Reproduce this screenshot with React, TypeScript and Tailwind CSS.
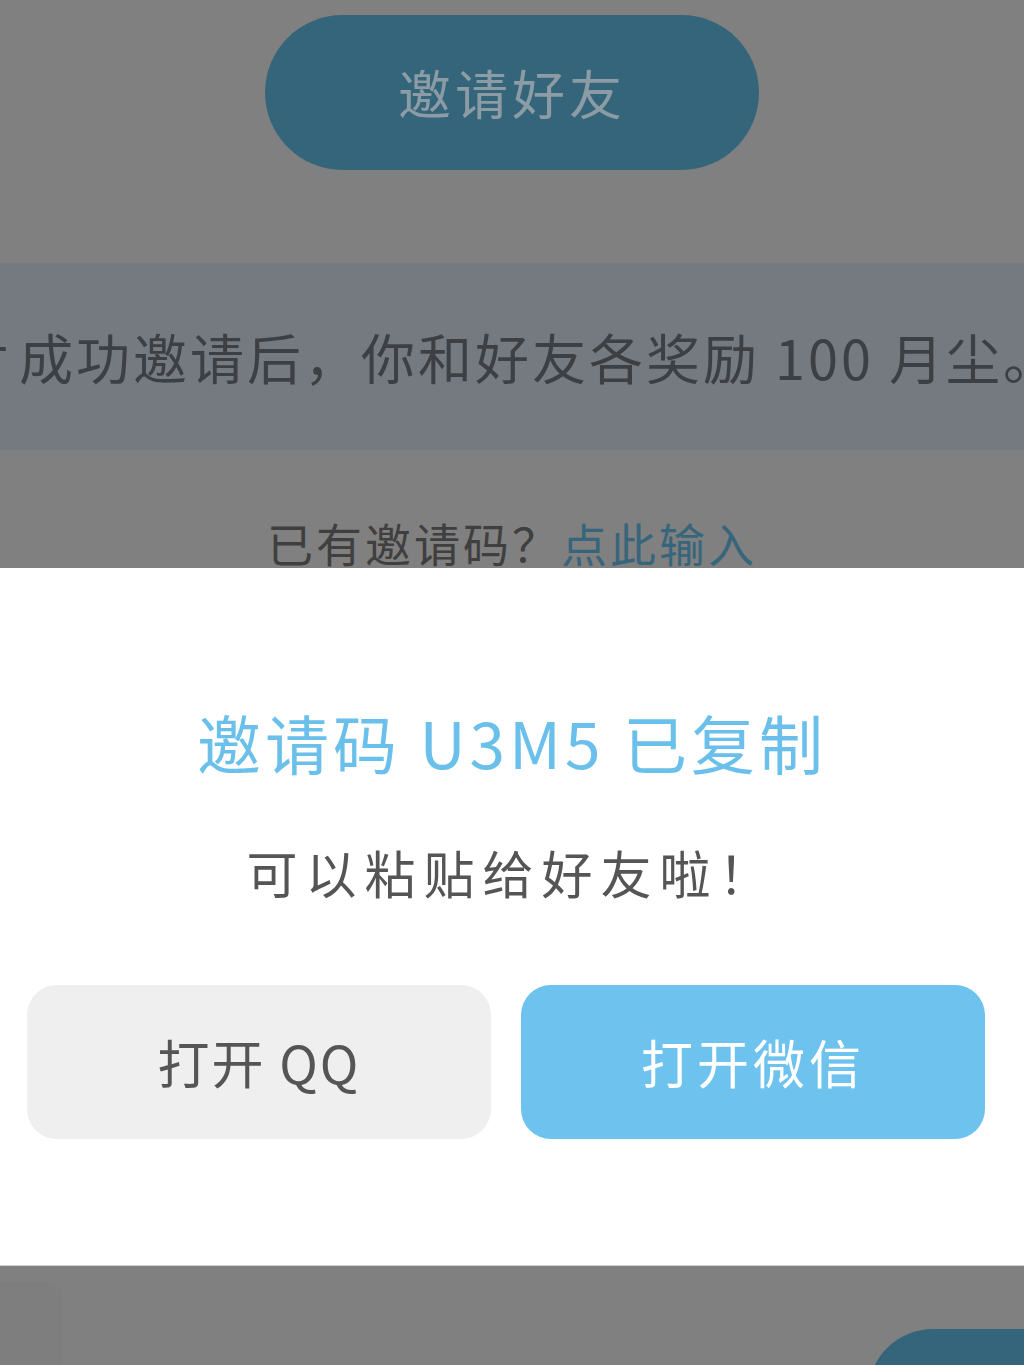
import React from "react";

const font = {
  fontFamily: '"Noto Sans CJK SC", "Noto Sans", sans-serif',
};

function BackgroundPage() {
  return (
    <>
      {/* Invite button (dimmed by overlay) */}
      <div className="flex shrink-0 justify-center pt-[15px]">
        <div className="flex h-[155px] w-[494px] items-center justify-center rounded-full bg-[#35657b]">
          <span className="text-[53px] leading-none tracking-[4px] text-[#8c9ca4]">邀请好友</span>
        </div>
      </div>

      {/* Reward hint band */}
      <div className="mt-[93px] flex h-[187px] shrink-0 items-center overflow-hidden bg-[#747a80]">
        <span className="ml-[-46px] whitespace-nowrap text-[54px] leading-none tracking-[3px] text-[#3c3f43]">
          <span className="mr-[8px]">对</span>成功邀请后，你和好友各奖励 100 月尘。
        </span>
      </div>

      {/* Existing code link */}
      <div className="flex h-[118px] shrink-0 justify-center overflow-hidden pt-[62px]">
        <p className="whitespace-nowrap text-[46px] leading-[60px] tracking-[3px] text-[#3f3f3f]">
          已有邀请码？<span className="text-[#36657c]">点此输入</span>
        </p>
      </div>
    </>
  );
}

function CopiedSheet() {
  return (
    <div className="flex h-[697px] shrink-0 flex-col bg-white shadow-[0_1px_0_#d0d0d0]">
      <h2 className="mt-[136px] text-center text-[64px] leading-[74px] tracking-[4px] text-[#6ac0ea]">
        邀请码 U3M5 已复制
      </h2>
      <p className="mt-[64px] text-center text-[51px] leading-[60px] tracking-[8px] text-[#555555]">
        可以粘贴给好友啦！
      </p>
      <div className="mt-[83px] flex gap-[30px] pl-[27px] pr-[39px]">
        <button className="flex h-[154px] flex-1 items-center justify-center rounded-[30px] bg-[#efefef] text-[52px] leading-none tracking-[2px] text-[#555555]">
          打开 QQ
        </button>
        <button className="flex h-[154px] flex-1 items-center justify-center rounded-[30px] bg-[#6ec3ee] text-[52px] leading-none tracking-[4px] text-white">
          打开微信
        </button>
      </div>
    </div>
  );
}

export default function App() {
  return (
    <div className="flex h-[1365px] w-[1024px] flex-col overflow-hidden bg-[#808080]" style={font}>
      <BackgroundPage />
      <CopiedSheet />

      {/* Page bottom peeking below the sheet */}
      <div className="flex shrink-0 justify-between">
        <div className="mt-[17px] h-[120px] w-[63px] rounded-tr-[16px] bg-[#7e7e7e]" />
        <div className="mt-[64px] h-[130px] w-[156px] rounded-l-[66px] bg-[#35657b]" />
      </div>
    </div>
  );
}
